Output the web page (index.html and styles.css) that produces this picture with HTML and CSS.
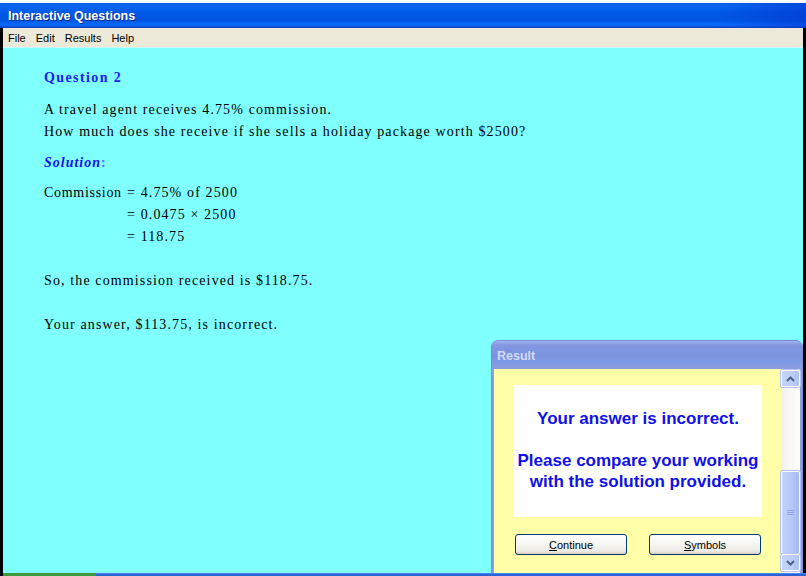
FILE: index.html
```html
<!DOCTYPE html>
<html>
<head>
<meta charset="utf-8">
<link rel="stylesheet" href="styles.css">
</head>
<body>
<div class="screen">
  <div class="window">
    <div class="titlebar"><span class="title">Interactive Questions</span></div>
    <div class="menubar">
      <span class="menu-item">File</span>
      <span class="menu-item">Edit</span>
      <span class="menu-item">Results</span>
      <span class="menu-item">Help</span>
    </div>
    <div class="content">
      <h2 class="q-head">Question 2</h2>
      <p class="para">A travel agent receives 4.75% commission.<br>How much does she receive if she sells a holiday package worth $2500?</p>
      <h3 class="sol-head">Solution<span class="colon">:</span></h3>
      <div class="working">
        <div class="wrow"><span class="lhs">Commission</span><span>= 4.75% of 2500</span></div>
        <div class="wrow"><span class="lhs"></span><span>= 0.0475 × 2500</span></div>
        <div class="wrow"><span class="lhs"></span><span>= 118.75</span></div>
      </div>
      <p class="para gap">So, the commission received is $118.75.</p>
      <p class="para gap">Your answer, $113.75, is incorrect.</p>
    </div>
  </div>

  <div class="dialog">
    <div class="dlg-title">Result</div>
    <div class="dlg-body">
      <div class="dlg-main">
        <div class="msg-box">
          <p class="msg">Your answer is incorrect.</p>
          <p class="msg">Please compare your working<br>with the solution provided.</p>
        </div>
        <div class="btn-row">
          <button class="btn"><u>C</u>ontinue</button>
          <button class="btn"><u>S</u>ymbols</button>
        </div>
      </div>
      <div class="scrollbar">
        <div class="sb-btn">
          <svg width="9" height="6" viewBox="0 0 9 6"><path d="M1 5 L4.5 1.5 L8 5" fill="none" stroke="#4d6185" stroke-width="2"/></svg>
        </div>
        <div class="sb-track"></div>
        <div class="sb-thumb">
          <svg width="7" height="7" viewBox="0 0 7 7"><path d="M0 1.5H7M0 3.5H7M0 5.5H7" stroke="#8ea6e8" stroke-width="1"/></svg>
        </div>
        <div class="sb-btn">
          <svg width="9" height="6" viewBox="0 0 9 6"><path d="M1 1 L4.5 4.5 L8 1" fill="none" stroke="#4d6185" stroke-width="2"/></svg>
        </div>
      </div>
    </div>
  </div>

  <div class="taskbar">
    <div class="start"></div>
    <div class="tasks"></div>
  </div>
</div>
</body>
</html>
```

FILE: styles.css
```css
* { box-sizing: border-box; }
html, body { margin: 0; padding: 0; }
body { width: 806px; height: 576px; overflow: hidden; background: #fff; }

.screen {
  position: relative;
  width: 806px;
  height: 576px;
  padding-top: 3px;
  background: #fff;
}

.window {
  display: flex;
  flex-direction: column;
  height: 573px;
  border-left: 3px solid #000;
  border-right: 3px solid #000;
  background: #80ffff;
}

.titlebar {
  height: 25px;
  display: flex;
  align-items: center;
  margin-left: -3px;
  margin-right: -3px;
  padding-left: 8px;
  background: linear-gradient(to bottom, #0a5fe8 0%, #0a66f4 12%, #0058e6 40%, #0056e2 70%, #0d6cff 88%, #0040c0 100%);
  position: relative;
}
.titlebar::after {
  content: "";
  position: absolute;
  right: 0; top: 0; bottom: 0;
  width: 90px;
  background: linear-gradient(to right, rgba(0,40,200,0), rgba(0,40,200,0.45));
}
.title {
  font-family: "Liberation Sans", Arial, sans-serif;
  font-weight: bold;
  font-size: 12.5px;
  color: #fff;
  text-shadow: 1px 1px 0 #0a2a8a;
  position: relative;
}

.menubar {
  height: 20px;
  display: flex;
  align-items: center;
  gap: 10px;
  padding-left: 5px;
  background: #ece9d8;
  border-bottom: 1px solid #c8ffff;
  font-family: "Liberation Sans", Arial, sans-serif;
  font-size: 11px;
  color: #000;
}

.content {
  flex: 1;
  padding: 22px 0 0 41px;
  font-family: "Liberation Serif", "Times New Roman", serif;
  font-size: 14px;
  letter-spacing: 1.12px;
  color: #000;
}

.q-head {
  margin: 0;
  font-size: 14px;
  font-weight: bold;
  color: #2020ee;
  letter-spacing: 1.4px;
  line-height: 16px;
}
.para {
  margin: 13px 0 0 0;
  line-height: 22px;
}
.sol-head {
  margin: 10px 0 0 0;
  font-size: 14px;
  font-weight: bold;
  font-style: italic;
  color: #1010ee;
  letter-spacing: 1px;
  line-height: 20px;
}
.colon { color: #6060ff; font-style: normal; }

.working { margin-top: 9px; }
.wrow { display: flex; line-height: 22px; height: 22px; }
.lhs { width: 83px; flex: none; letter-spacing: 0.7px; }

.para.gap { margin-top: 22px; }

/* Result dialog (floating window) */
.dialog {
  position: absolute;
  left: 491px;
  top: 340px;
  width: 312px;
  height: 236px;
  display: flex;
  flex-direction: column;
  background: #8b9fe0;
  border-radius: 7px 7px 0 0;
  border: 1px solid #7b8fd8;
  padding: 0 2px 0 2px;
}
.dlg-title {
  height: 27px;
  flex: none;
  display: flex;
  align-items: center;
  padding: 3px 0 0 5px;
  margin: 0 -2px;
  border-radius: 6px 6px 0 0;
  background: linear-gradient(to bottom, #a2b3ec 0%, #8397e0 15%, #7b93de 55%, #7f9ae4 80%, #8c9fe2 100%);
  font-family: "Liberation Sans", Arial, sans-serif;
  font-weight: bold;
  font-size: 12.5px;
  color: #d2dcf6;
}
.dlg-body {
  flex: 1;
  display: flex;
  background: #ffffa8;
  border-top: 1px solid #8b9fe0;
}
.dlg-main {
  flex: 1;
  display: flex;
  flex-direction: column;
  padding: 16px 0 0 20px;
}
.msg-box {
  width: 248px;
  height: 132px;
  background: #fff;
  padding-top: 23px;
  font-family: "Liberation Sans", Arial, sans-serif;
  font-weight: bold;
  font-size: 17px;
  color: #1010ea;
  text-align: center;
}
.msg { margin: 0 0 21px 0; line-height: 21px; }

.btn-row {
  display: flex;
  gap: 22px;
  margin-top: 17px;
  padding-left: 1px;
}
.btn {
  width: 112px;
  height: 21px;
  border: 1px solid #003c74;
  border-radius: 3px;
  background: linear-gradient(to bottom, #ffffff 0%, #f4f4f0 50%, #ecebe6 85%, #d6d0c5 100%);
  font-family: "Liberation Sans", Arial, sans-serif;
  font-size: 11px;
  color: #000;
  padding: 0;
  box-shadow: inset 0 -1px 0 #d6d0c5;
}

.scrollbar {
  width: 19px;
  flex: none;
  display: flex;
  flex-direction: column;
  background: linear-gradient(to right, #f3f1ec, #fefefb);
  padding: 1px 0 4px 0;
}
.sb-btn {
  height: 17px;
  flex: none;
  display: flex;
  align-items: center;
  justify-content: center;
  border: 1px solid #fff;
  border-radius: 2px;
  background: linear-gradient(to right, #c6d3f7, #bccdf7 60%, #aec1f2);
  box-shadow: 0 0 0 1px #b5c4ee;
}
.sb-track { flex: 1; }
.sb-thumb {
  height: 83px;
  flex: none;
  display: flex;
  align-items: center;
  justify-content: center;
  border: 1px solid #fff;
  border-radius: 2px;
  background: linear-gradient(to right, #c4d2fa, #b4c7f8 60%, #a2b8f0);
  box-shadow: 0 0 0 1px #b0c2ee;
}

.taskbar {
  position: absolute;
  left: 0;
  bottom: 0;
  width: 806px;
  height: 3px;
  display: flex;
}
.start { width: 96px; background: #3c9a3c; border-left: 3px solid #000; }
.tasks { flex: 1; background: #2a62d8; border-top: 1px solid #4a86ea; }
```
